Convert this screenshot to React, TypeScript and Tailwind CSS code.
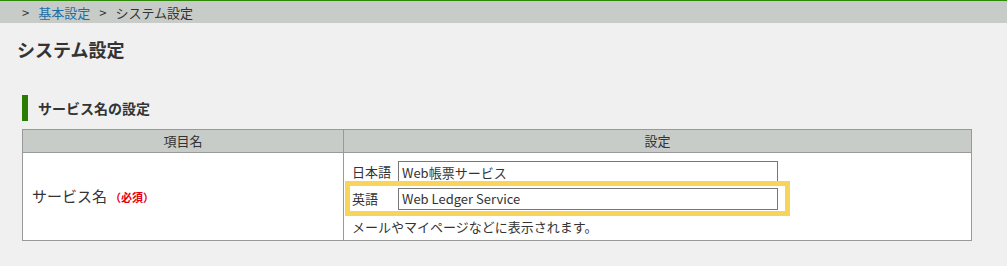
import React from 'react';

const font = { fontFamily: '"Noto Sans CJK JP", "Noto Sans", sans-serif' };

export default function App() {
  return (
    <div className="min-h-[266px] bg-[#eff0ef] text-[#333]" style={font}>
      {/* Breadcrumb */}
      <div className="border-t border-[#2f8a0a] bg-[#c8ccc8] h-[23px] flex items-center pl-[22px] text-[13px] leading-none">
        <span className="mr-[9px]">&gt;</span>
        <a className="text-[#1a6fa8]">基本設定</a>
        <span className="ml-[9px] mr-[9px]">&gt;</span>
        <span>システム設定</span>
      </div>

      {/* Title */}
      <h1 className="pl-[17px] pt-[13px] text-[18px] font-bold leading-[26px]">システム設定</h1>

      {/* Section */}
      <div className="px-[22px] pt-[33px] w-[994px]">
        <div className="flex items-center border-l-[6px] border-[#2a7d00] h-[26px] pl-[10px]">
          <h2 className="text-[14px] font-bold">サービス名の設定</h2>
        </div>

        <table className="mt-[8px] w-[950px] border-collapse bg-white text-[13px]">
          <thead>
            <tr className="bg-[#c8ccc8] h-[23px]">
              <th className="w-[321px] border border-[#999] font-normal">項目名</th>
              <th className="border border-[#999] font-normal">設定</th>
            </tr>
          </thead>
          <tbody>
            <tr className="h-[88px]">
              <td className="border border-[#999] pl-[9px] align-middle">
                <span className="text-[15px]">サービス名</span>
                <span className="ml-[3px] text-[11px] font-bold text-[#e60012]">（必須）</span>
              </td>
              <td className="border border-[#999] pl-[8px] pt-[8px] pb-[4px] align-top">
                <div className="flex items-center h-[22px]">
                  <span className="w-[46px]">日本語</span>
                  <input
                    readOnly
                    value="Web帳票サービス"
                    className="w-[380px] h-[22px] border border-[#777] px-[3px] text-[13px] outline-none"
                    style={font}
                  />
                </div>
                <div className="relative -ml-[7px] mt-[-2px] w-[445px] border-[5px] border-[#f8d55a] bg-white px-[2px] py-[1px]">
                  <div className="flex items-center h-[23px]">
                    <span className="w-[46px]">英語</span>
                    <input
                      readOnly
                      value="Web Ledger Service"
                      className="w-[380px] h-[22px] border border-[#777] px-[3px] text-[13px] outline-none"
                      style={font}
                    />
                  </div>
                </div>
                <p className="mt-[2px] leading-[18px]">メールやマイページなどに表示されます。</p>
              </td>
            </tr>
          </tbody>
        </table>
      </div>
    </div>
  );
}
